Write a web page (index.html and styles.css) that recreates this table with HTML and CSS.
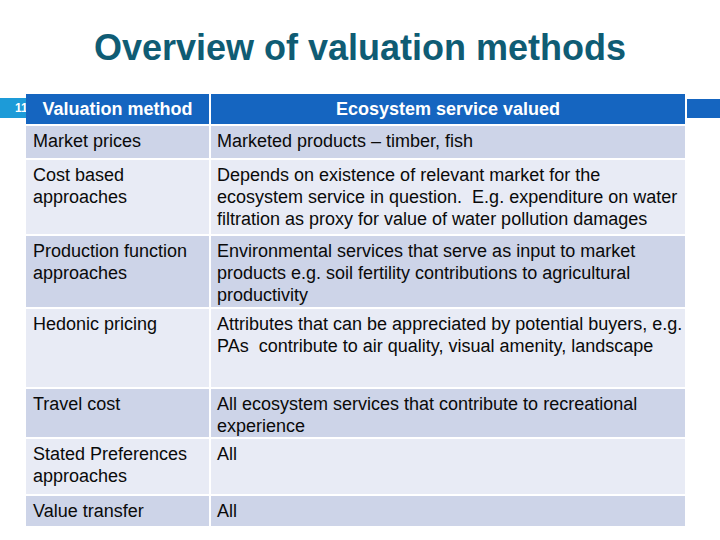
FILE: index.html
```html
<!DOCTYPE html>
<html>
<head>
<meta charset="utf-8">
<link rel="stylesheet" href="styles.css">
</head>
<body>
<div class="slide">
  <h1 class="title">Overview of valuation methods</h1>
  <div class="num-badge">11</div>
  <div class="right-tab"></div>
  <div class="grid">
    <div class="hd">Valuation method</div>
    <div class="hd">Ecosystem service valued</div>

    <div class="c dark">Market prices</div>
    <div class="c dark">Marketed products – timber, fish</div>

    <div class="c light">Cost based<br>approaches</div>
    <div class="c light">Depends on existence of relevant market for the<br>ecosystem service in question.&nbsp; E.g. expenditure on water<br>filtration as proxy for value of water pollution damages</div>

    <div class="c dark">Production function<br>approaches</div>
    <div class="c dark">Environmental services that serve as input to market<br>products e.g. soil fertility contributions to agricultural<br>productivity</div>

    <div class="c light">Hedonic pricing</div>
    <div class="c light">Attributes that can be appreciated by potential buyers, e.g.<br>PAs&nbsp; contribute to air quality, visual amenity, landscape</div>

    <div class="c dark">Travel cost</div>
    <div class="c dark">All ecosystem services that contribute to recreational<br>experience</div>

    <div class="c light">Stated Preferences<br>approaches</div>
    <div class="c light">All</div>

    <div class="c dark">Value transfer</div>
    <div class="c dark">All</div>
  </div>
</div>
</body>
</html>
```

FILE: styles.css
```css
html, body {
  margin: 0;
  padding: 0;
  background: #ffffff;
}
.slide {
  position: relative;
  width: 720px;
  height: 540px;
  overflow: hidden;
  font-family: "Liberation Sans", Arial, sans-serif;
  display: flex;
  flex-direction: column;
}
.title {
  margin: 28px 0 0 0;
  height: 40px;
  line-height: 40px;
  font-size: 36px;
  font-weight: bold;
  color: #0f5c74;
  text-align: center;
}
.num-badge {
  position: absolute;
  left: 0;
  top: 98px;
  width: 30px;
  height: 20px;
  background: #1d9bd8;
  color: #ffffff;
  font-size: 12px;
  font-weight: bold;
  line-height: 20px;
  box-sizing: border-box;
  padding-left: 15px;
}
.right-tab {
  position: absolute;
  left: 687px;
  top: 99px;
  width: 33px;
  height: 19px;
  background: #1565c0;
}
.grid {
  position: relative;
  margin: 26px 0 0 26px;
  display: grid;
  grid-template-columns: 183px 474px;
  grid-template-rows: 30px 32px 74px 71px 78px 48px 55px 30px;
  column-gap: 2px;
  row-gap: 2px;
  background: #ffffff;
  width: 659px;
}
.hd {
  background: #1565c0;
  color: #ffffff;
  font-weight: bold;
  font-size: 18px;
  line-height: 30px;
  text-align: center;
}
.c {
  font-size: 18px;
  line-height: 22px;
  color: #0a0a0a;
  padding: 4px 0 0 7px;
  white-space: nowrap;
  overflow: hidden;
}
.grid .c:nth-child(even) {
  padding-left: 6px;
}
.dark {
  background: #cdd4e8;
}
.light {
  background: #e8ebf5;
}
```
